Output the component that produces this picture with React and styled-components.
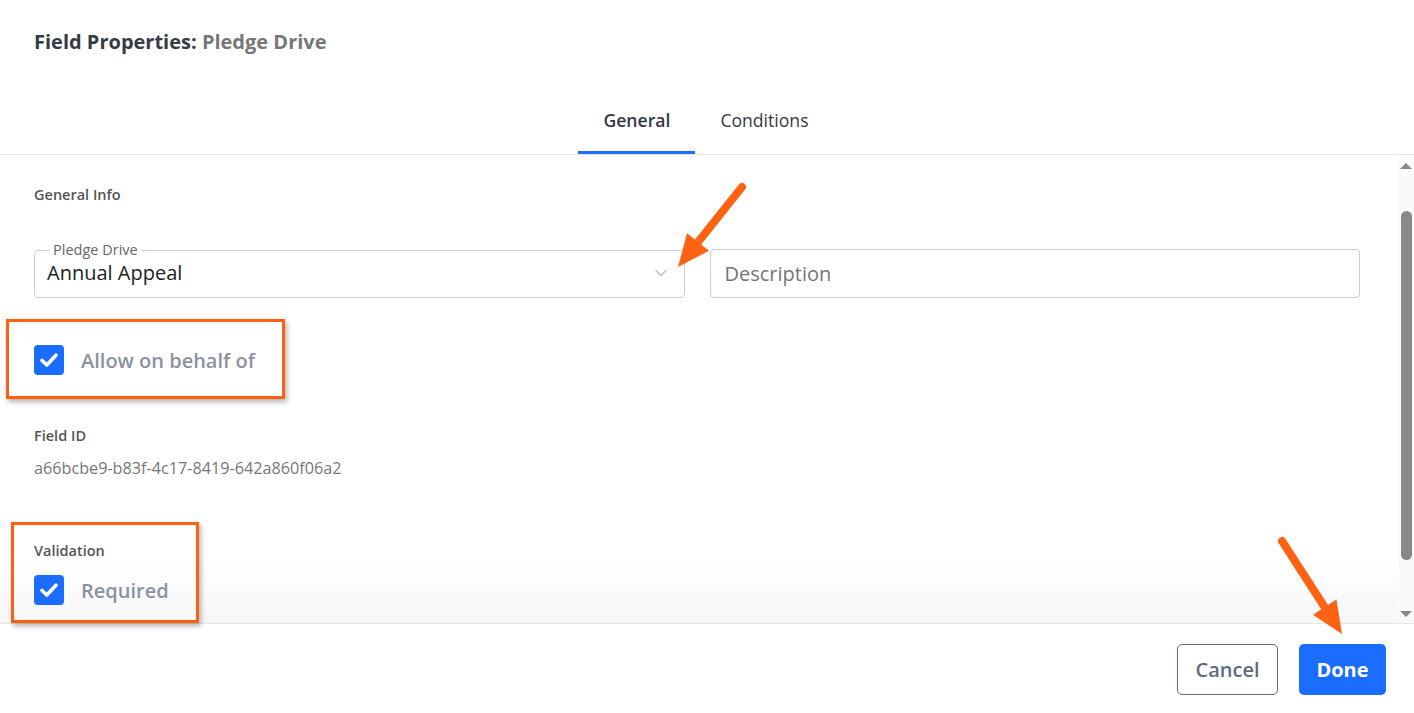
import React, { useState } from "react";
import styled, { createGlobalStyle } from "styled-components";

const tabs = ["General", "Conditions"];

const Arrow = ({ x1, y1, x2, y2 }) => {
	// orange annotation arrow, drawn from tail to tip
	const dx = x2 - x1;
	const dy = y2 - y1;
	const len = Math.sqrt(dx * dx + dy * dy);
	const ux = dx / len;
	const uy = dy / len;
	const head = 32;
	const half = 14;
	const bx = x2 - ux * head;
	const by = y2 - uy * head;
	const pts = `${x2},${y2} ${bx - uy * half},${by + ux * half} ${bx + uy * half},${by - ux * half}`;
	const minX = Math.min(x1, x2) - 20;
	const minY = Math.min(y1, y2) - 20;
	const w = Math.abs(dx) + 40;
	const h = Math.abs(dy) + 40;
	return (
		<ArrowSvg
			style={{ left: minX, top: minY }}
			width={w}
			height={h}
			viewBox={`${minX} ${minY} ${w} ${h}`}>
			<line
				x1={x1}
				y1={y1}
				x2={bx + ux * 4}
				y2={by + uy * 4}
				stroke='#fe6212'
				strokeWidth='8'
				strokeLinecap='round'
			/>
			<polygon points={pts} fill='#fe6212' />
		</ArrowSvg>
	);
};

const Check = () => (
	<svg width='22' height='22' viewBox='0 0 22 22'>
		<path
			d='M4 11.5 L8.8 16 L18 6.2'
			fill='none'
			stroke='#fff'
			strokeWidth='3.6'
			strokeLinecap='round'
			strokeLinejoin='round'
		/>
	</svg>
);

const App = () => {
	const [active, setActive] = useState("General");
	const [behalf, setBehalf] = useState(true);
	const [required, setRequired] = useState(true);

	return (
		<Page>
			<GlobalStyle />
			<Header>
				<Title>
					Field Properties: <span>Pledge Drive</span>
				</Title>
				<TabBar>
					{tabs.map((t) => (
						<Tab key={t} active={t === active} onClick={() => setActive(t)}>
							{t}
						</Tab>
					))}
				</TabBar>
			</Header>

			<Body>
				<Content>
					<SectionLabel>General Info</SectionLabel>
					<FieldRow>
						<SelectBox>
							<legend>Pledge Drive</legend>
							<SelectValue>Annual Appeal</SelectValue>
							<svg width='18' height='18' viewBox='0 0 18 18'>
								<path
									d='M4 6.5 L9 11.5 L14 6.5'
									fill='none'
									stroke='#c4c4c4'
									strokeWidth='1.6'
									strokeLinecap='round'
								/>
							</svg>
						</SelectBox>
						<TextInput placeholder='Description' />
					</FieldRow>

					<CheckRow top='47px' onClick={() => setBehalf(!behalf)}>
						<CheckBox checked={behalf}>{behalf && <Check />}</CheckBox>
						<CheckLabel>Allow on behalf of</CheckLabel>
					</CheckRow>

					<SectionLabel top='51px'>Field ID</SectionLabel>
					<IdValue>a66bcbe9-b83f-4c17-8419-642a860f06a2</IdValue>

					<SectionLabel top='62px'>Validation</SectionLabel>
					<CheckRow top='14px' onClick={() => setRequired(!required)}>
						<CheckBox checked={required}>{required && <Check />}</CheckBox>
						<CheckLabel>Required</CheckLabel>
					</CheckRow>
				</Content>
				<ScrollTrack>
					<ScrollArrow />
					<ScrollThumb />
					<ScrollArrow down />
				</ScrollTrack>
			</Body>

			<Footer>
				<CancelButton>Cancel</CancelButton>
				<DoneButton>Done</DoneButton>
			</Footer>

			<Highlight style={{ left: 6, top: 319, width: 279, height: 80 }} />
			<Highlight style={{ left: 11, top: 522, width: 188, height: 101 }} />
			<Arrow x1={742} y1={187} x2={678} y2={267} />
			<Arrow x1={1282} y1={541} x2={1342} y2={634} />
		</Page>
	);
};

export default App;

const GlobalStyle = createGlobalStyle`
	body {
		margin: 0;
		background: #fff;
		font-family: "Open Sans", "Noto Sans", sans-serif;
	}
	* {
		box-sizing: border-box;
	}
`;

const Page = styled.div`
	position: relative;
	width: 1414px;
	height: 713px;
	display: flex;
	flex-direction: column;
	overflow: hidden;
	background: #fff;
`;

const Header = styled.div`
	padding-top: 29px;
	border-bottom: 1px solid #e6e6e6;
`;

const Title = styled.div`
	padding-left: 34px;
	font-size: 20px;
	line-height: 26px;
	font-weight: 700;
	color: #343c47;

	span {
		color: #777;
	}
`;

const TabBar = styled.div`
	margin-top: 32px;
	display: flex;
	justify-content: center;
	padding-right: 2px;
`;

const Tab = styled.div`
	padding: 21px 25px 19px;
	line-height: 24px;
	font-size: 17.6px;
	font-weight: ${(props) => (props.active ? 600 : 400)};
	color: #333a44;
	border-bottom: 3px solid ${(props) => (props.active ? "#1a6dff" : "transparent")};
	cursor: pointer;
`;

const Body = styled.div`
	flex: 1;
	display: flex;
	min-height: 0;
	background: linear-gradient(#fff 400px, #f7f7f7);
`;

const Content = styled.div`
	flex: 1;
	padding: 30px 38px 0 34px;
	display: flex;
	flex-direction: column;
	align-items: flex-start;
`;

const SectionLabel = styled.div`
	margin-top: ${(props) => props.top || "0"};
	font-size: 14.5px;
	line-height: 20px;
	font-weight: 600;
	color: #555;
`;

const FieldRow = styled.div`
	margin-top: 37px;
	width: 100%;
	display: grid;
	grid-template-columns: 1fr 1fr;
	gap: 25px;
	align-items: end;
`;

const SelectBox = styled.fieldset`
	margin: 0;
	height: 56px;
	padding: 0 14px 0 12px;
	background: #fff;
	border: 1px solid #ccc;
	border-radius: 4px;
	display: flex;
	align-items: center;
	justify-content: space-between;

	legend {
		margin-left: 2px;
		padding: 0 4px;
		font-size: 14.5px;
		line-height: 16px;
		color: #666;
	}

	svg {
		margin-top: -10px;
	}
`;

const SelectValue = styled.div`
	margin-top: -10px;
	font-size: 20px;
	color: #222;
`;

const TextInput = styled.input`
	height: 49px;
	width: 100%;
	border: 1px solid #ccc;
	border-radius: 4px;
	padding: 0 14px;
	font-family: inherit;
	font-size: 20px;
	color: #222;
	outline: none;

	::placeholder {
		color: #9a9a9a;
	}
`;

const CheckRow = styled.div`
	margin-top: ${(props) => props.top};
	display: flex;
	align-items: center;
	gap: 17px;
	cursor: pointer;
`;

const CheckBox = styled.div`
	width: 30px;
	height: 30px;
	border-radius: 4px;
	background: ${(props) => (props.checked ? "#1a6dff" : "#fff")};
	border: ${(props) => (props.checked ? "none" : "2px solid #999")};
	display: flex;
	align-items: center;
	justify-content: center;
`;

const CheckLabel = styled.div`
	font-size: 20px;
	font-weight: 600;
	color: #8a939f;
`;

const IdValue = styled.div`
	margin-top: 11px;
	font-size: 16.2px;
	line-height: 22px;
	color: #777;
`;

const ScrollTrack = styled.div`
	width: 16px;
	background: #fafafa;
	display: flex;
	flex-direction: column;
	align-items: center;
	padding: 8px 0 6px;
`;

const ScrollArrow = styled.div`
	width: 0;
	height: 0;
	border-left: 6px solid transparent;
	border-right: 6px solid transparent;
	${(props) =>
		props.down
			? "border-top: 6px solid #888; margin-top: auto;"
			: "border-bottom: 6px solid #888;"}
`;

const ScrollThumb = styled.div`
	margin-top: 42px;
	width: 11px;
	height: 349px;
	border-radius: 6px;
	background: #888;
`;

const Footer = styled.div`
	height: 90px;
	border-top: 1px solid #e6e6e6;
	padding: 20px 28px 0 0;
	display: flex;
	justify-content: flex-end;
	align-items: flex-start;
	gap: 21px;
`;

const CancelButton = styled.button`
	height: 51px;
	width: 101px;
	border: 1px solid #5f6b7a;
	border-radius: 5px;
	background: #fff;
	color: #5f6b7a;
	font-family: inherit;
	font-size: 20px;
	font-weight: 600;
	cursor: pointer;
`;

const DoneButton = styled(CancelButton)`
	width: 87px;
	border: none;
	background: #1a6dff;
	color: #fff;
	font-weight: 700;
`;

const Highlight = styled.div`
	position: absolute;
	border: 3px solid #fe5f10;
	box-shadow: 2px 3px 5px rgba(0, 0, 0, 0.3);
	pointer-events: none;
`;

const ArrowSvg = styled.svg`
	position: absolute;
	pointer-events: none;
	overflow: visible;
`;
